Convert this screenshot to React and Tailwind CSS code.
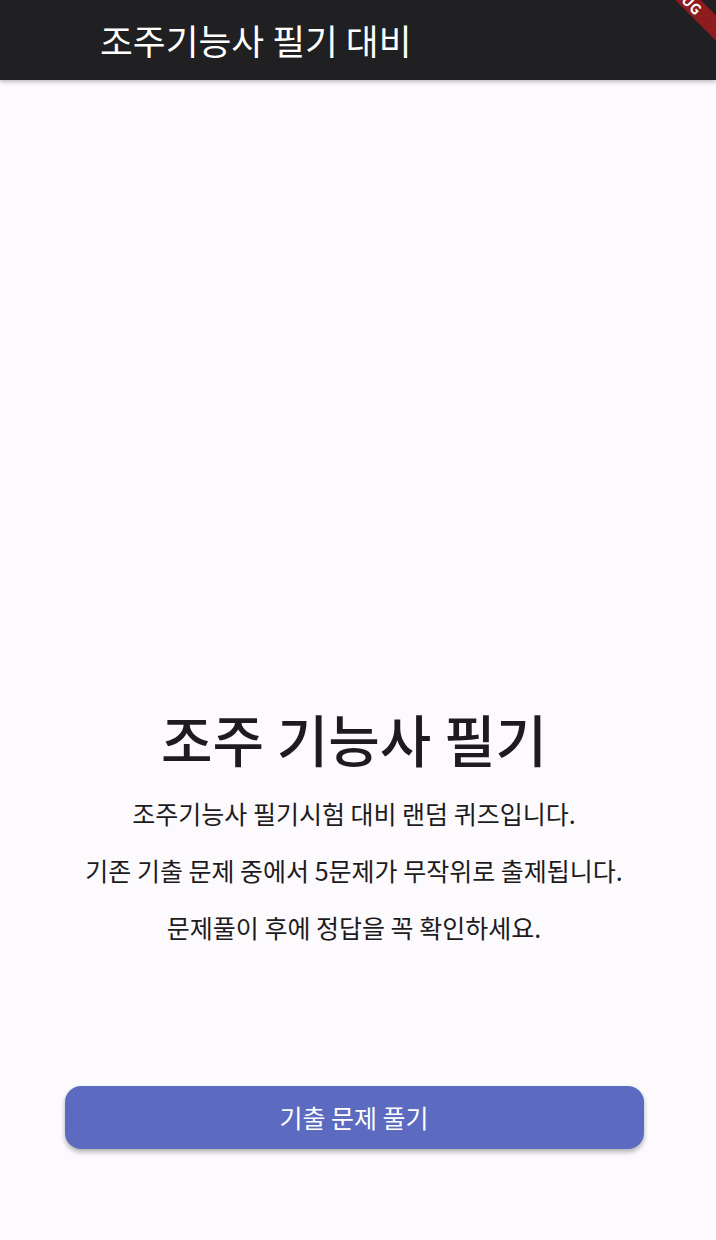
import React from 'react';

const FONT = { fontFamily: '"Noto Sans CJK KR", "Noto Sans", sans-serif' };

function DebugBanner() {
  return (
    <div className="pointer-events-none absolute right-0 top-0 h-[60px] w-[90px] overflow-hidden">
      <div className="absolute left-[-14px] top-[-15px] flex h-[18px] w-[140px] rotate-45 items-center justify-center bg-[#8e1b1d] text-[14px] font-bold tracking-wide text-white">
        DEBUG
      </div>
    </div>
  );
}

export default function App() {
  return (
    <div className="relative flex min-h-[1240px] w-full flex-col bg-[#fcfafd] text-[#1d1b20]" style={FONT}>
      <header className="relative z-10 flex h-[80px] items-center bg-[#201f22] pl-[100px] shadow-[0_2px_4px_rgba(0,0,0,0.25)]">
        <h1 className="text-[35.7px] font-normal leading-none text-white">조주기능사 필기 대비</h1>
        <DebugBanner />
      </header>

      <main className="flex flex-col items-center pr-[8px] pt-[626px]">
        <h2 className="text-[56px] font-medium leading-[64px]">조주 기능사 필기</h2>
        <div className="mt-[15px] flex flex-col items-center text-[25px]">
          <p className="flex h-[57px] items-center">조주기능사 필기시험 대비 랜덤 퀴즈입니다.</p>
          <p className="flex h-[57px] items-center">기존 기출 문제 중에서 5문제가 무작위로 출제됩니다.</p>
          <p className="flex h-[57px] items-center">문제풀이 후에 정답을 꼭 확인하세요.</p>
        </div>
        <button
          type="button"
          className="mt-[130px] flex h-[63px] w-[579px] items-center justify-center rounded-[16px] bg-[#5c6bc0] text-[25px] text-white shadow-[0_3px_5px_rgba(0,0,0,0.3)]"
        >
          기출 문제 풀기
        </button>
      </main>
    </div>
  );
}
